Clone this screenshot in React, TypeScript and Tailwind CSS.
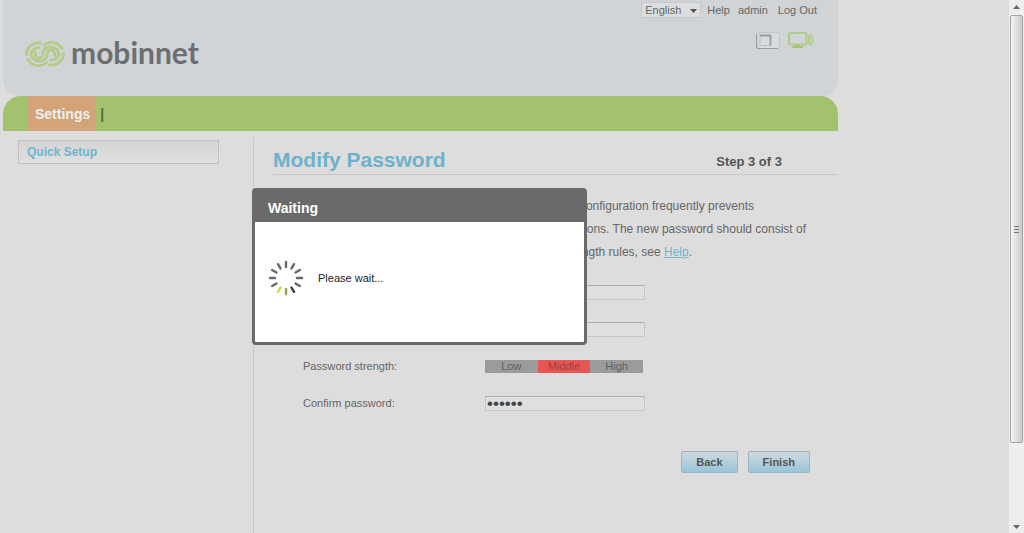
import { ReactNode } from 'react';

function LogoMark() {
  const half = (
    <>
      <path d="M1.5 14.5A12 11.5 0 0 1 15.5 3" />
      <path d="M6 14A8 7.5 0 0 1 14 7.6" />
      <path d="M10.2 12.5V14A3.8 4 0 0 0 17.8 14C17.8 9.5 21 7 26 7A8 7.5 0 0 1 34 14.5" />
      <path d="M18.5 5.2A12 11.5 0 0 1 37 8.5" />
    </>
  );
  return (
    <svg width="40" height="28" viewBox="0 0 40 28" fill="none" stroke="#b5cb87" strokeWidth="2.8" strokeLinecap="round" aria-hidden="true">
      {half}
      <g transform="rotate(180 20 14)">{half}</g>
    </svg>
  );
}

function SimIcon() {
  return (
    <svg width="24" height="18" viewBox="0 0 24 18" fill="none" aria-hidden="true">
      <rect x=".5" y=".5" width="23" height="16" rx="2" fill="#d9dadb" stroke="#c2c4c5" />
      <path d="M.6 2V15Q.6 16.5 2 16.5H22" stroke="#9b9d9e" strokeWidth="1.2" />
      <path d="M3.5 3.5H14.5V13.5" stroke="#989a9b" strokeWidth="1.8" />
      <path d="M4 4V13.5H14.5" stroke="#babcbd" />
    </svg>
  );
}

function MonitorIcon() {
  return (
    <svg width="26" height="18" viewBox="0 0 26 18" fill="none" aria-hidden="true">
      <rect x="1" y="1" width="17.5" height="11.5" rx="1.5" stroke="#afcc85" strokeWidth="2" />
      <path d="M7.5 13H12V14H15V16H4.5V14H7.5Z" fill="#a3c373" />
      <path d="M20 4L23 1.5Q28 8 23 14L20 11.5Z" fill="#b3cb90" />
      <path d="M22.3 3.5Q24.6 8 22.3 12" stroke="#cbd6bb" />
    </svg>
  );
}

const SPOKES = Array.from({ length: 12 }, (_, i) => i * 30);

function spokeColor(angle: number) {
  if (angle === 210) return '#c5e04a';
  if (angle === 180) return '#93a845';
  if (angle === 150) return '#3d402f';
  return '#686868';
}

function Spinner() {
  return (
    <svg width="36" height="36" viewBox="-18 -18 36 36" aria-hidden="true">
      {SPOKES.map((angle) => (
        <line
          key={angle}
          x1="0"
          y1="-11"
          x2="0"
          y2="-16"
          stroke={spokeColor(angle)}
          strokeWidth="2.4"
          strokeLinecap="round"
          transform={`rotate(${angle})`}
        />
      ))}
    </svg>
  );
}

function Header() {
  return (
    <header className="h-24 rounded-b-2xl bg-[#d1d4d6] pt-0.5 text-[11px] text-[#666]">
      <div className="flex h-4 items-center justify-end pr-[21px]">
        <div className="relative mr-1.5">
          <select
            aria-label="Language"
            className="block h-4 w-15 appearance-none border border-[#c6c8c9] bg-[#dcddde] pl-[3px] text-[11px] leading-none"
          >
            <option>English</option>
          </select>
          <svg className="pointer-events-none absolute top-[7px] right-1" width="7" height="4" viewBox="0 0 7 4">
            <path d="M0 0H7L3.5 4Z" fill="#555" />
          </svg>
        </div>
        <a href="#help" className="mr-2">Help</a>
        <a href="#account" className="mr-2.5">admin</a>
        <a href="#logout">Log Out</a>
      </div>
      <div className="flex items-start justify-between pt-3.5 pr-6 pl-[22px]">
        <div className="flex items-start gap-1.5 pt-1.5">
          <div className="pt-0.5">
            <LogoMark />
          </div>
          <span className="font-['Lato',sans-serif] text-[30px] leading-7 font-bold text-[#6c6f72]">mobinnet</span>
        </div>
        <div className="flex gap-2">
          <SimIcon />
          <MonitorIcon />
        </div>
      </div>
    </header>
  );
}

function Nav() {
  return (
    <nav className="flex h-[35px] items-stretch rounded-t-[18px] bg-[#a3c26d] pl-[25px] text-sm font-bold">
      <a href="#settings" className="flex items-center bg-[#d3a47a] pr-1.5 pl-[7px] text-[#eee]">Settings</a>
      <span className="flex items-center pl-1 text-[#55693b]">|</span>
    </nav>
  );
}

function FormRow({ label, id, children }: { label: string; id?: string; children: ReactNode }) {
  return (
    <div className="flex h-[37px] items-center">
      {id ? (
        <label htmlFor={id} className="w-[182px]">{label}</label>
      ) : (
        <span className="w-[182px]">{label}</span>
      )}
      {children}
    </div>
  );
}

function PasswordInput({ id, value }: { id: string; value: string }) {
  return (
    <input
      id={id}
      type="password"
      defaultValue={value}
      className="h-[15px] w-40 border border-[#c6c6c6] border-t-[#b0b0b0] bg-[#dfdfdf] px-px text-[17px] leading-[13px] text-[#444]"
    />
  );
}

function StrengthMeter() {
  return (
    <div className="grid h-[13px] w-[158px] grid-cols-3 bg-[#9b9b9b] text-center leading-[13px] text-[#5f5f5f]">
      <span>Low</span>
      <span className="bg-[#e85555] text-[#a14040]">Middle</span>
      <span>High</span>
    </div>
  );
}

function ActionButton({ children }: { children: ReactNode }) {
  return (
    <button className="h-[22px] rounded-xs border border-[#9fb4be] bg-linear-to-b from-[#cfdade] to-[#98c5d9] px-3.5 text-[11px] font-bold text-[#555]">
      {children}
    </button>
  );
}

function PasswordPage() {
  return (
    <main className="ml-[19px] min-w-0 flex-1">
      <div className="flex h-[38px] items-end justify-between border-b border-[#c8c8c8] pr-14 font-bold">
        <h1 className="text-[21px] leading-7 text-[#6fb1ca]">Modify Password</h1>
        <span className="text-[13px] leading-6 text-[#555]">Step 3 of 3</span>
      </div>
      <div className="pt-5 text-right text-xs leading-[23px] whitespace-nowrap text-[#666]">
        <p className="pr-[84px]">Changing the password used for logging in to the configuration frequently prevents</p>
        <p className="pr-8">unauthorized users from modifying the device options. The new password should consist of</p>
        <p className="pr-[146px]">6 to 15 characters. For details about the password strength rules, see <a href="#help" className="text-[#6fb4cf] underline">Help</a>.</p>
      </div>
      <form className="pt-2.5 pl-[30px] text-[11px] text-[#666]">
        <FormRow label="Current password:" id="current">
          <PasswordInput id="current" value="secret" />
        </FormRow>
        <FormRow label="New password:" id="new">
          <PasswordInput id="new" value="secret" />
        </FormRow>
        <FormRow label="Password strength:">
          <StrengthMeter />
        </FormRow>
        <FormRow label="Confirm password:" id="confirm">
          <PasswordInput id="confirm" value="secret" />
        </FormRow>
        <div className="flex justify-end gap-2.5 pt-[29px] pr-7">
          <ActionButton>Back</ActionButton>
          <ActionButton>Finish</ActionButton>
        </div>
      </form>
    </main>
  );
}

function WaitingDialog() {
  return (
    <div className="absolute inset-0 flex items-center justify-center pr-0.5">
      <div role="dialog" aria-label="Waiting" className="w-[335px] rounded-sm border-3 border-[#6a6a6a] bg-white">
        <h2 className="bg-[#6a6a6a] px-[13px] pt-2 pb-1 text-sm leading-[19px] font-bold text-white">Waiting</h2>
        <div className="flex h-[120px] items-center gap-3.5 px-[13px] pb-2 text-[11px] text-[#222]">
          <Spinner />
          <p>Please wait...</p>
        </div>
      </div>
    </div>
  );
}

function Scrollbar() {
  return (
    <div className="flex w-[15px] flex-col items-center bg-[#eee]" aria-hidden="true">
      <svg width="7" height="15" viewBox="0 0 7 15">
        <path d="M0 9H7L3.5 5Z" fill="#666" />
      </svg>
      <div className="flex w-[13px] flex-[428] items-center justify-center rounded-xs border border-[#a3a3a3] bg-linear-to-r from-[#f5f5f5] to-[#c9cacf]">
        <svg width="5" height="8" viewBox="0 0 5 8" stroke="#777">
          <path d="M0 1.5H5M0 4.5H5M0 7.5H5" />
        </svg>
      </div>
      <div className="flex-[75]" />
      <svg width="7" height="15" viewBox="0 0 7 15">
        <path d="M0 7H7L3.5 11Z" fill="#666" />
      </svg>
    </div>
  );
}

export default function App() {
  return (
    <div className="flex min-h-screen bg-[#ddd] font-['Liberation_Sans',Arial,sans-serif]">
      <div className="flex-1">
        <div className="relative ml-[3px] flex min-h-screen max-w-[835px] flex-col">
          <Header />
          <Nav />
          <div className="flex flex-1 pt-1.5">
            <aside className="w-[251px] border-r border-[#c9c9c9] pt-[3px] pl-[15px]">
              <a
                href="#quick-setup"
                className="mr-[34px] block border border-[#c0c0c0] bg-linear-to-b from-[#d4d4d4] to-[#e0e0e0] pl-2 text-xs leading-[22px] font-bold text-[#6fb4cf]"
              >
                Quick Setup
              </a>
            </aside>
            <PasswordPage />
          </div>
          <WaitingDialog />
        </div>
      </div>
      <Scrollbar />
    </div>
  );
}
